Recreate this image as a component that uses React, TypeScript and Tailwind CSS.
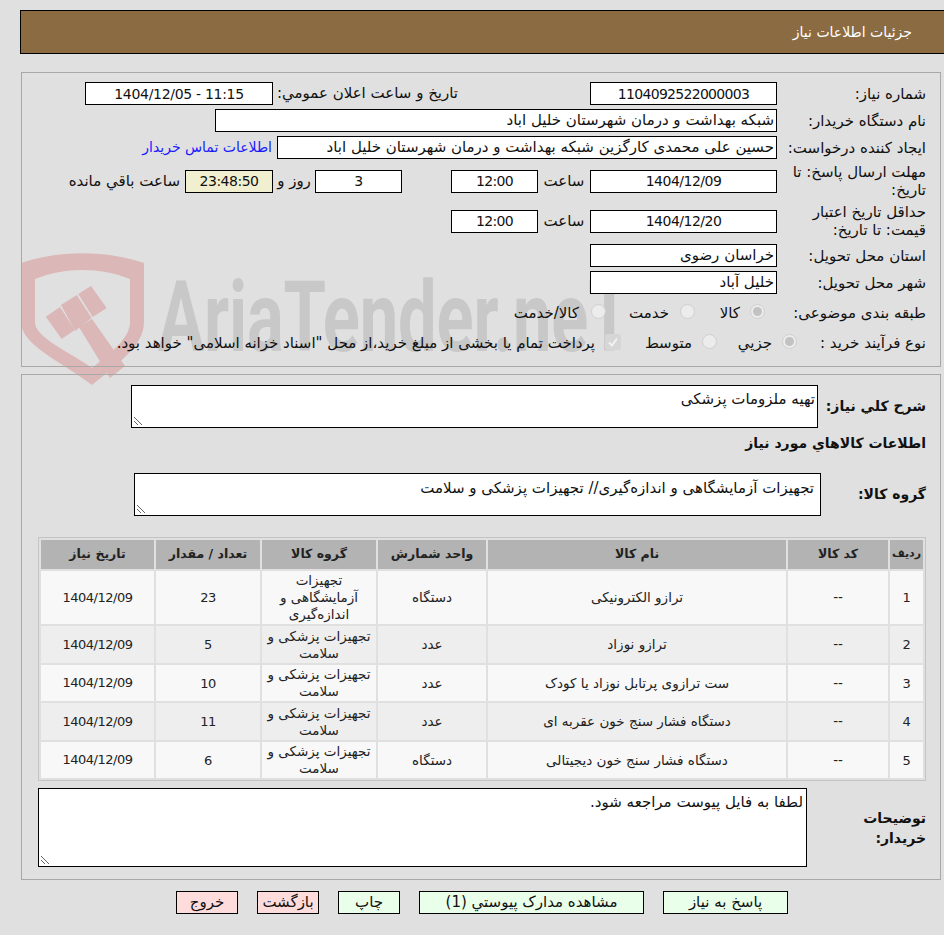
const field = "h-[23px] border border-black flex items-center leading-none whitespace-nowrap";
const textField = field + " bg-white pr-[2px]";
const numField = field + " justify-center text-[14px]";

function Row({ label, children, h }: { label: React.ReactNode; children: React.ReactNode; h: string }) {
  return (
    <div className={"flex items-center " + h}>
      <div className="w-[163px] shrink-0 pr-[14px] text-right leading-[18px] whitespace-nowrap">{label}</div>
      <div className="flex-1 flex items-center min-w-0">{children}</div>
    </div>
  );
}

function Radio({ on }: { on?: boolean }) {
  return (
    <span className="mb-[3px] w-[15px] h-[15px] rounded-full border border-[#cfcfcf] bg-[#ececec] flex items-center justify-center shrink-0">
      {on ? <span className="w-[9px] h-[9px] rounded-full bg-[#c2c2c2]" /> : null}
    </span>
  );
}

function Watermark() {
  return (
    <div className="absolute left-0 top-[240px] w-[700px] h-[145px] overflow-hidden pointer-events-none" dir="ltr">
      <svg width="160" height="145" viewBox="0 240 160 145" className="absolute left-0 top-0">
        <path
          fillRule="evenodd"
          fill="#dbb7b7"
          d="M21 263 C60 250 105 250 144 263 L144 322 C144 345 120 362 92 385 C62 362 21 345 21 322 Z M35 279 C65 267 100 267 130 279 L130 322 C130 338 112 352 92 368 C70 352 35 338 35 322 Z"
        />
        <g fill="#dbb7b7">
          <path d="M45.7 316.7 L60 307 L74.7 330 L61.7 339 Z" />
          <path d="M61 305 L76.7 295 L91.7 318 L75 331 Z" />
          <path d="M78.3 294 L91 286 L106.7 308 L92.7 317 Z" />
          <path d="M79 327 L92 319 L125 366 L110 378 Z" />
        </g>
      </svg>
      <span className="absolute left-[158px] top-[29px] font-['Roboto',sans-serif] font-bold text-[#c8c8c8] text-[98px] leading-none whitespace-nowrap origin-left scale-x-[0.7]">
        AriaTender.neT
      </span>
    </div>
  );
}

const rows = [
  ["1", "--", "ترازو الکترونیکی", "دستگاه", "تجهیزات\nآزمایشگاهی و\nاندازه‌گیری", "23", "h-[53px]", "bg-[#f8f8f8]"],
  ["2", "--", "ترازو نوزاد", "عدد", "تجهیزات پزشکی و\nسلامت", "5", "h-[37px]", "bg-[#eeeeee]"],
  ["3", "--", "ست ترازوی پرتابل نوزاد یا کودک", "عدد", "تجهیزات پزشکی و\nسلامت", "10", "h-[36px]", "bg-[#f8f8f8]"],
  ["4", "--", "دستگاه فشار سنج خون عقربه ای", "عدد", "تجهیزات پزشکی و\nسلامت", "11", "h-[37px]", "bg-[#eeeeee]"],
  ["5", "--", "دستگاه فشار سنج خون دیجیتالی", "دستگاه", "تجهیزات پزشکی و\nسلامت", "6", "h-[36px]", "bg-[#f8f8f8]"],
];

const headers = ["ردیف", "کد کالا", "نام کالا", "واحد شمارش", "گروه کالا", "تعداد / مقدار", "تاریخ نیاز"];
const widths = ["w-[33px]", "w-[100px]", "w-[298px]", "w-[108px]", "w-[114px]", "w-[104px]", "w-[113px]"];
const cellFont = ["text-[13px] tracking-[-0.5px]", "", "", "", "", "text-[13px] tracking-[-0.5px]"];

function Btn({ w, c, children }: { w: string; c: string; children: React.ReactNode }) {
  return <div className={w + " " + c + " h-[23px] border border-black flex items-center justify-center"}>{children}</div>;
}

function Grip() {
  return (
    <svg width="10" height="10" viewBox="0 0 10 10" className="absolute left-[1px] bottom-[1px]">
      <path d="M1 1 L9 9 M1 5 L5 9" stroke="#666" strokeWidth="1" fill="none" />
    </svg>
  );
}

export default function App() {
  return (
    <div dir="rtl" className="relative w-[944px] h-[935px] bg-[#e0e0e0] text-[15px] text-[#111] overflow-hidden font-['DejaVu_Sans','Noto_Sans',sans-serif] tracking-[-0.2px]">
      <Watermark />
      <div className="relative pt-[10px] pl-[20px]">
        <div className="h-[44px] bg-[#8b6b42] border border-black border-r-0 text-white text-[14px] flex items-center pr-[32px]">جزئیات اطلاعات نیاز</div>

        <div className="mt-[18px] ml-[1px] mr-[3px] h-[295px] border border-[#a8a8a8] pt-[7px]">
          <Row label="شماره نیاز:" h="h-[27px]">
            <div className={numField + " w-[187px] bg-white tracking-[-0.7px]"}>1104092522000003</div>
            <div className="mr-[132px] w-[185px] pl-[5px] text-right whitespace-nowrap">تاریخ و ساعت اعلان عمومي:</div>
            <div dir="ltr" className={numField + " w-[188px] bg-white tracking-[-0.3px]"}>1404/12/05 - 11:15</div>
          </Row>
          <Row label="نام دستگاه خریدار:" h="h-[27px]">
            <div className={textField + " w-[562px]"}>شبکه بهداشت و درمان شهرستان خلیل اباد</div>
          </Row>
          <Row label="ایجاد کننده درخواست:" h="h-[27px]">
            <div className={textField + " w-[500px]"}>حسین علی محمدی کارگزین شبکه بهداشت و درمان شهرستان خلیل اباد</div>
            <a className="mr-[5px] text-[14px] text-[#1a1aff] whitespace-nowrap">اطلاعات تماس خریدار</a>
          </Row>
          <Row label={<>مهلت ارسال پاسخ: تا<br />تاریخ:</>} h="h-[40px]">
            <div className={numField + " w-[187px] bg-white tracking-[-0.5px]"}>1404/12/09</div>
            <div className="w-[52px] text-center">ساعت</div>
            <div className={numField + " w-[87px] bg-white tracking-[-0.7px]"}>12:00</div>
            <div className="w-[49px]" />
            <div className={numField + " w-[87px] bg-white"}>3</div>
            <div className="w-[42px] text-center whitespace-nowrap">روز و</div>
            <div className={numField + " w-[88px] bg-[#f0f0d0] tracking-[-0.5px]"}>23:48:50</div>
            <div className="mr-[5px] whitespace-nowrap">ساعت باقي مانده</div>
          </Row>
          <Row label={<>حداقل تاریخ اعتبار<br />قیمت: تا تاریخ:</>} h="h-[40px]">
            <div className={numField + " w-[187px] bg-white tracking-[-0.5px]"}>1404/12/20</div>
            <div className="w-[52px] text-center">ساعت</div>
            <div className={numField + " w-[87px] bg-white tracking-[-0.7px]"}>12:00</div>
          </Row>
          <Row label="استان محل تحویل:" h="h-[29px]">
            <div className={textField + " w-[187px]"}>خراسان رضوی</div>
          </Row>
          <Row label="شهر محل تحویل:" h="h-[25px]">
            <div className={textField + " w-[187px]"}>خلیل آباد</div>
          </Row>
          <Row label="طبقه بندی موضوعی:" h="h-[36px]">
            <div className="flex items-center w-[82px] pr-[12px] gap-[10px]"><Radio on /><span>کالا</span></div>
            <div className="flex items-center w-[89px] gap-[11px]"><Radio /><span>خدمت</span></div>
            <div className="flex items-center gap-[12px] whitespace-nowrap"><Radio /><span>کالا/خدمت</span></div>
          </Row>
          <div className="flex items-center h-[24px]">
            <div className="w-[143px] shrink-0 pr-[14px] text-right whitespace-nowrap">نوع فرآیند خرید :</div>
            <div className="flex items-center w-[80px] gap-[10px]"><Radio on /><span>جزیي</span></div>
            <div className="flex items-center w-[96px] gap-[10px]"><Radio /><span>متوسط</span></div>
            <span className="mb-[3px] w-[16px] h-[16px] rounded-[2px] bg-[#d6d6d6] flex items-center justify-center shrink-0">
              <svg width="12" height="12" viewBox="0 0 12 12"><path d="M2 6.5 L5 9.5 L10 2.5" fill="none" stroke="#f2f2f2" strokeWidth="2" /></svg>
            </span>
            <span className="mr-[10px] whitespace-nowrap">پرداخت تمام یا بخشی از مبلغ خرید،از محل "اسناد خزانه اسلامی" خواهد بود.</span>
          </div>
        </div>

        <div className="mt-[7px] ml-[1px] mr-[3px] h-[506px] border border-[#a8a8a8] pt-[10px]">
          <div className="flex items-center h-[43px]">
            <div className="w-[122px] shrink-0 pr-[14px] text-[14px] font-bold whitespace-nowrap">شرح کلي نیاز:</div>
            <div className="relative w-[687px] h-[43px] border border-black bg-white pr-[2px] pt-[2px]">
              تهیه ملزومات پزشکی
              <Grip />
            </div>
          </div>
          <div className="h-[30px] pr-[14px] flex items-center text-[14px] font-bold">اطلاعات کالاهاي مورد نیاز</div>
          <div className="flex items-center h-[43px] mt-[15px]">
            <div className="w-[119px] shrink-0 pr-[14px] text-[14px] font-bold whitespace-nowrap">گروه کالا:</div>
            <div className="relative w-[687px] h-[43px] border border-black bg-white pr-[6px] pt-[3px] whitespace-nowrap">
              تجهیزات آزمایشگاهی و اندازه‌گیری// تجهیزات پزشکی و سلامت
              <Grip />
            </div>
          </div>
          <div className="mt-[21px] mr-[14px] w-[888px] h-[244px] border border-[#c4c4c4] p-[2px] flex flex-col gap-[2px] text-[#222] text-[13.5px]">
            <div className="flex gap-[2px] h-[29px] shrink-0">
              {headers.map((t, i) => (
                <div key={t} className={widths[i] + " bg-[#b3b3b3] flex items-center justify-center font-bold whitespace-nowrap " + (i === 0 ? "text-[11px] tracking-[-0.4px]" : "text-[12.5px]")}>{t}</div>
              ))}
            </div>
            {rows.map((r) => (
              <div key={r[0]} className={"flex gap-[2px] shrink-0 " + r[6]}>
                {r.slice(0, 6).map((c, i) => (
                  <div key={i} className={widths[i] + " " + r[7] + " " + cellFont[i] + " flex items-center justify-center text-center leading-[17px] whitespace-pre-line"}>{c}</div>
                ))}
                <div className={widths[6] + " " + r[7] + " flex items-center justify-center text-[13px] tracking-[-0.5px]"}>1404/12/09</div>
              </div>
            ))}
          </div>
          <div className="flex items-center mt-[7px] h-[79px]">
            <div className="w-[133px] shrink-0 pr-[14px] text-[14px] font-bold leading-[20px]">توضیحات<br />خریدار:</div>
            <div className="relative w-[769px] h-[79px] border border-black bg-white pr-[3px] pt-[2px]">
              لطفا به فایل پیوست مراجعه شود.
              <Grip />
            </div>
          </div>
        </div>

        <div className="mt-[11px] flex justify-center gap-[19px] text-[15px]">
          <Btn w="w-[125px]" c="bg-[#eaffea]">پاسخ به نیاز</Btn>
          <Btn w="w-[225px]" c="bg-[#eaffea]">مشاهده مدارک پیوستي (1)</Btn>
          <Btn w="w-[62px]" c="bg-[#eaffea]">چاپ</Btn>
          <Btn w="w-[62px]" c="bg-[#ffdcdc]">بازگشت</Btn>
          <Btn w="w-[62px]" c="bg-[#ffdcdc]">خروج</Btn>
        </div>
      </div>
    </div>
  );
}
